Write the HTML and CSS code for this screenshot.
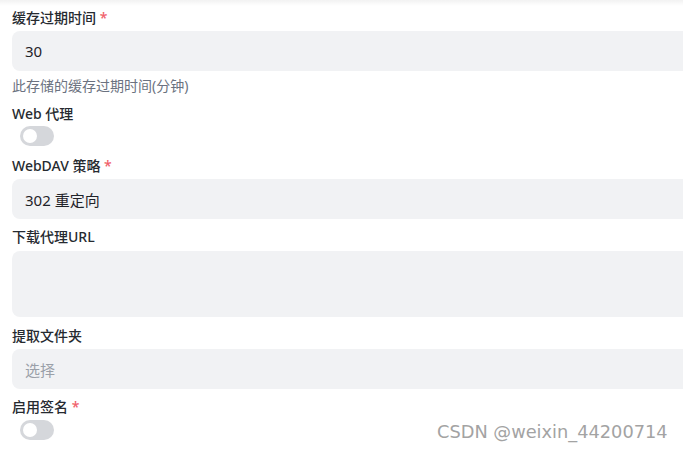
FILE: index.html
```html
<!DOCTYPE html>
<html lang="zh-CN">
<head>
<meta charset="utf-8">
<title>存储设置</title>
<link rel="stylesheet" href="styles.css">
</head>
<body>
<div class="topshade"></div>
<div class="viewport">
<form class="form">
  <div class="field">
    <label class="label">缓存过期时间 <span class="req">*</span></label>
    <div class="input">30</div>
    <div class="help">此存储的缓存过期时间(分钟)</div>
  </div>
  <div class="field field-switch">
    <label class="label">Web 代理</label>
    <span class="switch"><span class="knob"></span></span>
  </div>
  <div class="field">
    <label class="label">WebDAV 策略 <span class="req">*</span></label>
    <div class="input">302 重定向</div>
  </div>
  <div class="field field-area">
    <label class="label">下载代理URL</label>
    <div class="input textarea"></div>
  </div>
  <div class="field">
    <label class="label">提取文件夹</label>
    <div class="input placeholder">选择</div>
  </div>
  <div class="field field-switch">
    <label class="label">启用签名 <span class="req">*</span></label>
    <span class="switch"><span class="knob"></span></span>
  </div>
</form>
</div>
<div class="watermark">CSDN @weixin_44200714</div>
</body>
</html>
```
FILE: styles.css
```css
html, body {
  margin: 0;
  padding: 0;
  background: #ffffff;
  overflow: hidden;
  width: 683px;
  height: 451px;
}
body {
  position: relative;
  font-family: "Noto Sans", "Noto Sans CJK SC", sans-serif;
  color: #1f2329;
}
.topshade {
  position: absolute;
  left: 0;
  right: 0;
  top: 0;
  height: 6px;
  background: linear-gradient(to bottom, rgba(0,0,0,0.05), rgba(0,0,0,0));
}
.viewport {
  width: 683px;
  overflow: hidden;
}
.form {
  display: flex;
  flex-direction: column;
  padding: 8px 0 0 12px;
  margin-right: -40px;
}
.field {
  display: flex;
  flex-direction: column;
  margin-bottom: 8px;
}
.field-switch { margin-bottom: 10px; }
.field-area { margin-bottom: 9px; }
.label {
  font-size: 14px;
  line-height: 20px;
  font-weight: 500;
  color: #262a30;
}
.req {
  color: #f0606a;
  font-weight: 500;
}
.input {
  margin-top: 3px;
  height: 40px;
  box-sizing: border-box;
  background: #f1f2f4;
  border-radius: 8px;
  padding: 0 13px;
  display: flex;
  align-items: center;
  font-size: 15px;
  color: #1f2329;
}
.textarea {
  margin-top: 4px;
  height: 66px;
}
.placeholder { color: #9aa0a8; }
.help {
  margin-top: 5px;
  font-size: 14px;
  line-height: 20px;
  color: #6b7280;
}
.switch {
  margin: 2px 0 0 8px;
  width: 34px;
  height: 20px;
  border-radius: 10px;
  background: #d5d7db;
  display: flex;
  align-items: center;
  padding-left: 3px;
  box-sizing: border-box;
}
.field-switch:last-child .switch { margin-top: 3px; }
.knob {
  width: 14px;
  height: 14px;
  border-radius: 50%;
  background: #ffffff;
}
.watermark {
  position: absolute;
  left: 437px;
  top: 421px;
  font-family: "DejaVu Sans", sans-serif;
  font-size: 17.8px;
  line-height: 22px;
  color: #a3a3a3;
  white-space: nowrap;
}
```
